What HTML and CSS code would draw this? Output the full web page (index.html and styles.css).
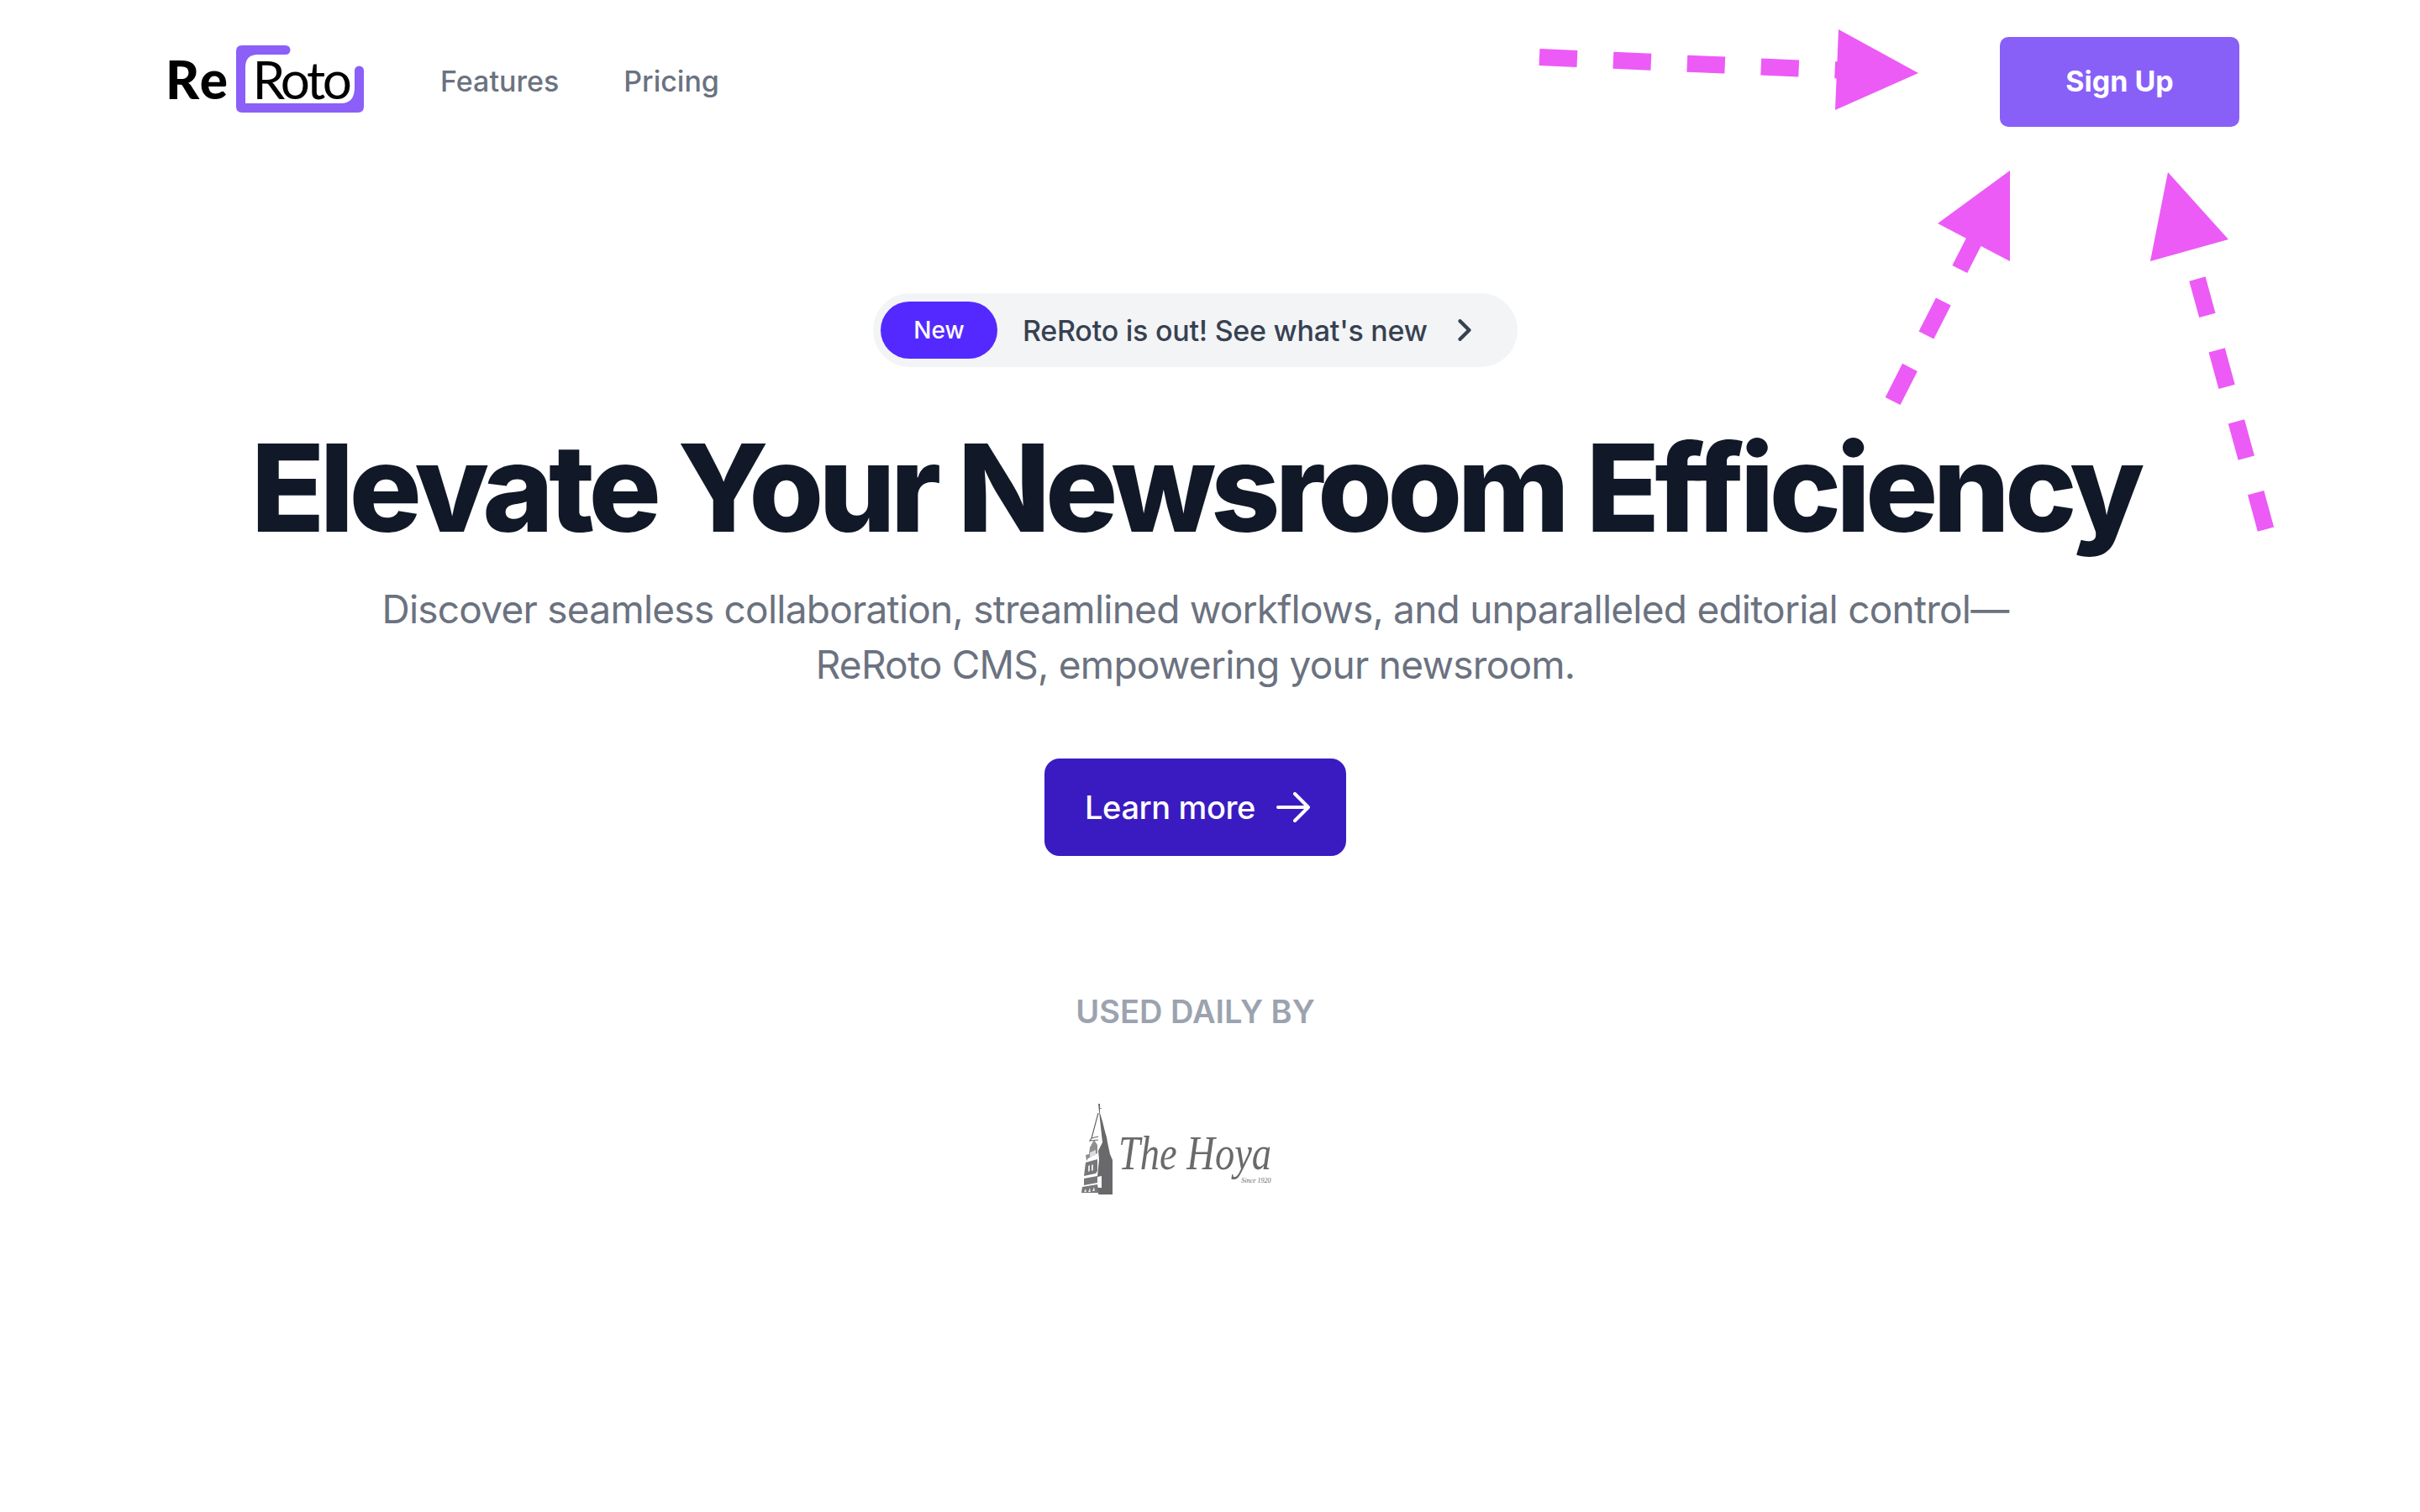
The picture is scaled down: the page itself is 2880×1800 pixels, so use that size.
FILE: index.html
```html
<!DOCTYPE html>
<html lang="en">
<head>
    <meta charset="UTF-8">
    <meta name="viewport" content="width=device-width, initial-scale=1.0">
    <title>ReRoto</title>
    <link rel="stylesheet" href="styles.css">
</head>
<body>
    <header class="nav">
        <a class="logo" href="#">
            <span class="logo-re">Re</span>
            <span class="logo-roto">Roto</span>
            <svg class="logo-bracket" viewBox="0 0 152 80" aria-hidden="true">
                <path fill="#8b5ff8" d="M7 0H59a5.500 5.500 0 0 1 0 11H26Q11 11 11 26V69H125Q141 69 141 50V30a5.500 5.500 0 0 1 11 0V73Q152 80 145 80H7Q0 80 0 73V7Q0 0 7 0Z"/>
            </svg>
        </a>
        <nav class="nav-links">
            <a href="#">Features</a>
            <a href="#">Pricing</a>
        </nav>
        <a class="signup" href="#">Sign Up</a>
    </header>

    <main class="hero">
        <a class="badge" href="#">
            <span class="badge-new">New</span>
            <span class="badge-text">ReRoto is out! See what's new</span>
            <svg class="badge-chevron" viewBox="0 0 16 24" aria-hidden="true">
                <path d="M3 2l10 10L3 22" fill="none" stroke="#374151" stroke-width="4" stroke-linecap="round" stroke-linejoin="round"/>
            </svg>
        </a>
        <h1>Elevate Your Newsroom Efficiency</h1>
        <p class="lead">Discover seamless collaboration, streamlined workflows, and unparalleled editorial control—<br>ReRoto CMS, empowering your newsroom.</p>
        <a class="learn" href="#">
            Learn more
            <svg class="learn-arrow" viewBox="0 0 40 36" aria-hidden="true">
                <path d="M2 18H38M22 2l16 16-16 16" fill="none" stroke="#fff" stroke-width="4" stroke-linecap="round" stroke-linejoin="round"/>
            </svg>
        </a>
        <h2 class="used">USED DAILY BY</h2>
        <div class="hoya">
            <svg class="hoya-tower" viewBox="5 4 40 108" aria-hidden="true">
                <!-- lado oscuro de la torre -->
                <path fill="#69696b" d="M27 4h2v5h1.500v1H29v5l3 10 3 12 2 7 1 6 3 14 3 7v42l-16 1-3-10h6V90l-5 1 2-21-1-10 5-10z"/>
                <!-- contorno y detalles del lado claro -->
                <path fill="none" stroke="#69696b" stroke-width="1.200" d="M27 15l-8 30 8-2M19 45l-2 3 10-1"/>
                <path fill="#8f8f91" d="M22 47l4 6v10l-11 6-2 3-1-7 4-1 1-8z"/>
                <path fill="#dcdcdd" d="M17 62l7-3v6l-7 3z"/>
                <path fill="#77777a" d="M12 74l14-4v14l-2 3-14 3z"/>
                <path fill="#e4e4e5" d="M15 78l2-1v7l-2 1zM19 77l2-1v7l-2 1z"/>
                <path fill="#77777a" d="M10 93l16-3v8l-16 3zM7 110l1-7 18-3 2 10z"/>
                <path fill="#e4e4e5" d="M10 109l2-4 1 4zM15 109l2-5 1 5zM20 108l2-5 1 5z"/>
            </svg>
            <div class="hoya-name">
                <span class="hoya-title">The Hoya</span>
                <span class="hoya-since">Since 1920</span>
            </div>
        </div>
    </main>

    <!-- flechas de anotacion encima de la pagina -->
    <svg class="arrows" viewBox="0 0 2880 1800" aria-hidden="true">
        <g fill="none" stroke="#ec5bf6" stroke-width="20" stroke-dasharray="45 43">
            <path d="M1832 68L2200 84"/>
            <path d="M2252.600 477.500L2360 266"/>
            <path d="M2615 332L2697 632"/>
        </g>
        <g fill="#ec5bf6">
            <path d="M2188 35L2283 87L2184 131Z"/>
            <path d="M2392 203L2306 266L2392 311Z"/>
            <path d="M2580 205L2652 285L2559 311Z"/>
        </g>
    </svg>
</body>
</html>
```

FILE: styles.css
```css
/* General */
body {
    font-family: Inter, "Liberation Sans", sans-serif;
    margin: 0;
    padding: 0;
    background-color: #fff;
    color: #111827;
}

a {
    text-decoration: none;
}

/* Nav */
.nav {
    display: flex;
    align-items: center;
    height: 107px;
    padding: 44px 215px 0 200px;
}

.logo {
    position: relative;
    display: flex;
    align-items: center;
    align-self: flex-start;
    width: 233px;
    height: 80px;
    margin-top: 10px;
    color: #000;
    font-family: Lato, sans-serif;
    font-size: 62px;
    line-height: 1;
}

.logo-re {
    margin-left: -3px;
    font-weight: 900;
    letter-spacing: 2.5px;
}

.logo-roto {
    margin-left: 27px;
    font-weight: 400;
    letter-spacing: -3.4px;
}

.logo-bracket {
    position: absolute;
    left: 81px;
    top: 0;
    width: 152px;
    height: 80px;
}

.nav-links {
    display: flex;
    gap: 77px;
    margin-left: 91px;
    padding-bottom: 3px;
}

.nav-links a {
    color: #6b7280;
    font-size: 34px;
    font-weight: 500;
}

.signup {
    display: flex;
    align-items: center;
    justify-content: center;
    box-sizing: border-box;
    width: 285px;
    height: 107px;
    padding-bottom: 2px;
    margin-left: auto;
    background-color: #8860f8;
    border-radius: 10px;
    color: #fff;
    font-size: 34px;
    font-weight: 700;
}

/* Hero */
.hero {
    display: flex;
    flex-direction: column;
    align-items: center;
    padding: 198px 35px 0 0;
}

.badge {
    display: flex;
    align-items: center;
    width: 767px;
    height: 88px;
    box-sizing: border-box;
    padding-left: 9px;
    background-color: #f3f4f6;
    border-radius: 44px;
    color: #374151;
    font-size: 34px;
}

.badge-new {
    display: flex;
    align-items: center;
    justify-content: center;
    width: 139px;
    height: 68px;
    background-color: #5429ff;
    border-radius: 34px;
    color: #fff;
    font-size: 28px;
    font-weight: 500;
}

.badge-text {
    margin-left: 30px;
    font-weight: 500;
    letter-spacing: -0.25px;
}

.badge-chevron {
    width: 18px;
    height: 26px;
    margin-left: 35px;
}

h1 {
    margin: 65px 0 0;
    color: #111827;
    font-size: 144px;
    font-weight: 800;
    line-height: 1.1;
    letter-spacing: -6px;
}

.lead {
    margin: 32px 0 0;
    color: #6b7280;
    font-size: 46px;
    font-weight: 400;
    line-height: 66px;
    letter-spacing: -0.76px;
    text-align: center;
}

.learn {
    display: flex;
    align-items: center;
    justify-content: center;
    box-sizing: border-box;
    gap: 25px;
    width: 359px;
    height: 116px;
    padding-left: 5px;
    margin-top: 79px;
    background-color: #3a1bc1;
    border-radius: 18px;
    color: #fff;
    font-size: 38px;
    font-weight: 500;
    letter-spacing: -0.4px;
}

.learn-arrow {
    width: 40px;
    height: 36px;
}

.used {
    margin: 162px 0 0;
    color: #9ca3af;
    font-size: 38px;
    font-weight: 600;
}

.hoya {
    display: flex;
    align-items: flex-start;
    gap: 6px;
    margin: 87px 48px 0 0;
}

.hoya-tower {
    width: 40px;
    height: 108px;
}

.hoya-name {
    position: relative;
    width: 182px;
    height: 70px;
    margin-top: 39px;
    color: #6a6a6c;
    font-family: "Liberation Serif", serif;
    font-style: italic;
}

.hoya-title {
    display: block;
    font-size: 56px;
    line-height: 40px;
    white-space: nowrap;
    transform: scaleX(0.83);
    transform-origin: left center;
}

.hoya-since {
    position: absolute;
    right: 0;
    top: 48px;
    font-size: 8px;
    white-space: nowrap;
}

/* Arrows drawn over the page */
.arrows {
    position: absolute;
    left: 0;
    top: 0;
    width: 2880px;
    height: 1800px;
    pointer-events: none;
}
```
